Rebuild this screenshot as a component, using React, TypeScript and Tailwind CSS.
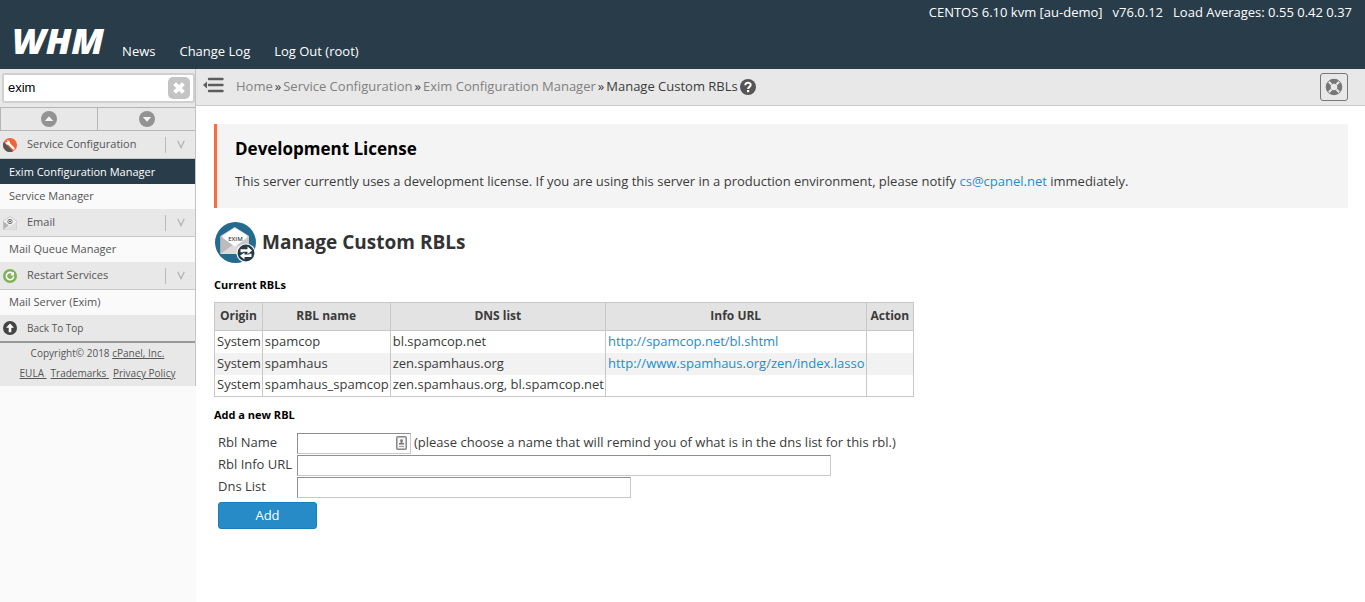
import React, { useState } from "react";

const NAV_LINKS = ["News", "Change Log", "Log Out (root)"];

const MENU = [
  {
    title: "Service Configuration",
    icon: <WrenchIcon />,
    items: ["Exim Configuration Manager", "Service Manager"],
  },
  { title: "Email", icon: <MailIcon />, items: ["Mail Queue Manager"] },
  {
    title: "Restart Services",
    icon: <RestartIcon />,
    items: ["Mail Server (Exim)"],
  },
];

const CRUMBS = ["Home", "Service Configuration", "Exim Configuration Manager"];

const RBLS = [
  {
    name: "spamcop",
    dns: "bl.spamcop.net",
    url: "http://spamcop.net/bl.shtml",
  },
  {
    name: "spamhaus",
    dns: "zen.spamhaus.org",
    url: "http://www.spamhaus.org/zen/index.lasso",
  },
  { name: "spamhaus_spamcop", dns: "zen.spamhaus.org, bl.spamcop.net", url: "" },
];

function WrenchIcon() {
  return (
    <svg width="14" height="14" viewBox="0 0 14 14">
      <circle cx="7" cy="7" r="7" fill="#f0623a" />
      <path d="M0.7 4 A7 7 0 0 0 10 13.3 Z" fill="#555" />
      <path d="M5 4.8 L10.6 10.6" stroke="#fff" strokeWidth="2.2" strokeLinecap="round" />
      <path
        d="M2.6 3.6 L4.4 5.2 L5.3 4.3 L3.6 2.5 C5.4 1.9 7.2 3.2 6.9 5.2 L5.4 6.8 C3.5 7.1 2.1 5.4 2.6 3.6 Z"
        fill="#fff"
      />
    </svg>
  );
}

function MailIcon() {
  return (
    <svg width="14" height="14" viewBox="0 0 14 14">
      <path d="M0.5 5 L7 0.5 L13.5 5 V13.5 H0.5 Z" fill="#f4f4f4" stroke="#c9c9c9" />
      <path d="M0.5 5.5 L6 9.5 L0.5 13.5 Z" fill="#b5b5b5" />
      <path d="M13.5 5.5 L8 9.5 L1 13.8 H13.5 Z" fill="#dedede" />
      <circle cx="7" cy="5.5" r="2.2" fill="none" stroke="#777" strokeWidth="1" />
      <circle cx="7" cy="5.5" r="1" fill="#666" />
    </svg>
  );
}

function RestartIcon() {
  return (
    <svg width="14" height="14" viewBox="0 0 14 14">
      <circle cx="7" cy="7" r="7" fill="#7fb257" />
      <path d="M9.6 4.4 A3.7 3.7 0 1 0 10.7 7.4" fill="none" stroke="#fff" strokeWidth="1.6" />
      <path d="M11 2.8 V6.6 H7.2 Z" fill="#fff" />
    </svg>
  );
}

function TopIcon() {
  return (
    <svg width="14" height="14" viewBox="0 0 14 14">
      <circle cx="7" cy="7" r="7" fill="#444" />
      <path d="M7 2.4 L11 6.8 H8.3 V11.2 H5.7 V6.8 H3 Z" fill="#fff" />
    </svg>
  );
}

function ArrowDisc({ down = false }: { down?: boolean }) {
  return (
    <svg width="16" height="16" viewBox="0 0 16 16">
      <circle cx="8" cy="8" r="8" fill="#939393" />
      <path d={down ? "M3.8 6 H12.2 L8 10.8 Z" : "M3.8 10 H12.2 L8 5.2 Z"} fill="#f4f4f4" />
    </svg>
  );
}

function EximIcon() {
  return (
    <svg width="42" height="42" viewBox="0 0 42 42" className="shrink-0">
      <circle cx="21.5" cy="21.5" r="20.5" fill="#256b90" />
      <path d="M6.5 15 L20.8 6 L35 15 V33 H6.5 Z" fill="#d8d8d8" />
      <path d="M6.5 15 L20.8 25 L6.5 33 Z" fill="#bcbcbc" />
      <path d="M35 15 L20.8 25 L35 33 Z" fill="#c8c8c8" />
      <path d="M6.5 33 L20.8 22.5 L35 33 Z" fill="#dcdcdc" />
      <path d="M9 14.5 L20.8 7 L33 14.5 V17 L20.8 25.5 L9 17 Z" fill="#fff" />
      <text
        x="21.5"
        y="19.5"
        textAnchor="middle"
        fontSize="6"
        fontFamily="Open Sans, sans-serif"
        fontWeight="600"
        fill="#444"
      >
        EXIM
      </text>
      <circle cx="32" cy="32" r="9.6" fill="#fff" />
      <circle cx="32" cy="32" r="8.4" fill="#263a47" />
      <path d="M26.5 31.2 V28.2 H33.5 V25.6 L38.1 29.6 L33.5 33.2 V30.8 H28.9 V31.2 Z" fill="#fff" />
      <path d="M37.5 32.8 V36 H30.5 V38.4 L25.9 34.7 L30.5 31.4 V33.6 H35.3 V32.8 Z" fill="#fff" />
    </svg>
  );
}

function Header() {
  return (
    <header className="flex h-[69px] justify-between bg-[#293c4a] text-white">
      <div className="flex items-end pb-[9px]">
        <a href="#" className="ml-3 text-[36px] leading-[38px] font-extrabold italic">
          WHM
        </a>
        <nav className="ml-[18px] flex gap-6 leading-[18px]">
          {NAV_LINKS.map((link) => (
            <a key={link} href="#">
              {link}
            </a>
          ))}
        </nav>
      </div>
      <div className="flex gap-[10px] pt-[3px] pr-[13px] leading-[18px]">
        <span>CENTOS 6.10 kvm [au-demo]</span>
        <span>v76.0.12</span>
        <span>Load Averages: 0.55 0.42 0.37</span>
      </div>
    </header>
  );
}

function Sidebar() {
  const [query, setQuery] = useState("exim");

  return (
    <aside className="w-[196px] shrink-0 bg-[#fafafa] text-[11px] text-[#555]">
      <div className="border-r border-[#c4c4c4] bg-[#e8e8e8]">
        <div className="py-1 pl-[2px]">
          <div className="flex h-[30px] items-center rounded-[3px] border-2 border-[#d0d0d0] bg-white pr-[3px] pl-1">
            <input
              aria-label="Search"
              value={query}
              onChange={(e) => setQuery(e.target.value)}
              className="w-full min-w-0 font-['Liberation_Sans',sans-serif] text-[13px] text-black outline-none"
            />
            <button
              aria-label="Clear search"
              onClick={() => setQuery("")}
              className="flex size-[22px] shrink-0 items-center justify-center rounded-[5px] bg-[#c4c4c4]"
            >
              <svg width="14" height="14" viewBox="0 0 14 14">
                <path d="M2.6 2.6 L11.4 11.4 M11.4 2.6 L2.6 11.4" stroke="#fff" strokeWidth="4" />
              </svg>
            </button>
          </div>
        </div>
        <div className="grid h-6 grid-cols-2 border-y border-l border-[#b5b5b5]">
          <button aria-label="Previous" className="flex items-center justify-center border-r border-[#b5b5b5]">
            <ArrowDisc />
          </button>
          <button aria-label="Next" className="flex items-center justify-center">
            <ArrowDisc down />
          </button>
        </div>
        {MENU.map((group) => (
          <div key={group.title}>
            <div className="flex h-7 items-center border-b border-[#c8c8c8] pl-[3px]">
              {group.icon}
              <span className="ml-[10px] flex-1">{group.title}</span>
              <button
                aria-label={`Collapse ${group.title}`}
                className="flex h-4 w-[30px] items-center justify-center border-l border-[#bbb]"
              >
                <svg width="8" height="9" viewBox="0 0 8 9">
                  <path d="M0.7 0.8 L4 7.6 L7.3 0.8" fill="none" stroke="#b4b4b4" strokeWidth="1.3" />
                </svg>
              </button>
            </div>
            {group.items.map((item) => (
              <a
                key={item}
                href="#"
                className={
                  item === "Exim Configuration Manager"
                    ? "block h-[25px] bg-[#293c4a] pl-[9px] leading-[25px] text-white"
                    : "block h-[25px] bg-[#fafafa] pl-[9px] leading-6"
                }
              >
                {item}
              </a>
            ))}
          </div>
        ))}
        <a href="#" className="flex h-7 items-center border-b-2 border-[#999] pl-[3px]">
          <TopIcon />
          <span className="ml-[10px] text-[10px]">Back To Top</span>
        </a>
        <footer className="h-[43px] text-center text-[10px] leading-5">
          <p>
            Copyright© 2018{" "}
            <a href="#" className="underline">
              cPanel, Inc.
            </a>
          </p>
          <p className="flex justify-center gap-1 whitespace-pre">
            <a href="#" className="underline">{"EULA "}</a>
            <a href="#" className="underline">{"Trademarks "}</a>
            <a href="#" className="underline">Privacy Policy</a>
          </p>
        </footer>
      </div>
    </aside>
  );
}

function Breadcrumbs() {
  return (
    <div className="flex h-[37px] items-center border-b border-[#ccc] bg-[#e8e8e8] pr-[17px] pl-[7px]">
      <button aria-label="Toggle menu" className="mb-1">
        <svg width="21" height="16" viewBox="0 0 21 16">
          <path d="M6 2 H19.5 M6 8 H19.5 M6 14 H19.5" stroke="#5c5c5c" strokeWidth="2.4" strokeLinecap="round" />
          <path d="M0 8 L4 4.6 V11.4 Z" fill="#5c5c5c" />
        </svg>
      </button>
      <nav className="ml-3 flex flex-1 items-center gap-[2px]">
        {CRUMBS.map((crumb) => (
          <React.Fragment key={crumb}>
            <a href="#" className="text-[#808080]">
              {crumb}
            </a>
            <span>»</span>
          </React.Fragment>
        ))}
        <span>Manage Custom RBLs</span>
        <button aria-label="Help">
          <svg width="16" height="16" viewBox="0 0 16 16">
            <circle cx="8" cy="8" r="8" fill="#555" />
            <path
              d="M5.3 6.2 C5.3 2.9 10.7 3 10.7 6 C10.7 7.8 8.1 7.9 8.1 9.9"
              fill="none"
              stroke="#fff"
              strokeWidth="2"
            />
            <rect x="7" y="11" width="2.2" height="2.2" fill="#fff" />
          </svg>
        </button>
      </nav>
      <button
        aria-label="Support"
        className="flex size-7 items-center justify-center rounded-[3px] border border-[#777]"
      >
        <svg width="18" height="18" viewBox="0 0 18 18">
          <circle cx="9" cy="9" r="5.8" fill="none" stroke="#777" strokeWidth="5" />
          <path
            d="M3.8 3.8 L6.5 6.5 M14.2 3.8 L11.5 6.5 M3.8 14.2 L6.5 11.5 M14.2 14.2 L11.5 11.5"
            stroke="#e8e8e8"
            strokeWidth="2"
          />
        </svg>
      </button>
    </div>
  );
}

const cellStyle = "border-x border-[#c8c8c8] pr-px pb-[2px] pl-[2px]";

function RblTable() {
  return (
    <table className="border-collapse border border-[#c8c8c8] leading-[18px]">
      <thead>
        <tr className="h-7 bg-[#e3e3e3] text-[12px]">
          {["Origin", "RBL name", "DNS list", "Info URL", "Action"].map((head) => (
            <th key={head} className="border border-[#c8c8c8] px-1 pb-[2px]">
              {head}
            </th>
          ))}
        </tr>
      </thead>
      <tbody>
        {RBLS.map((rbl) => (
          <tr key={rbl.name} className="h-[22px] even:bg-[#f2f2f2]">
            <td className={cellStyle}>System</td>
            <td className={cellStyle}>{rbl.name}</td>
            <td className={cellStyle}>{rbl.dns}</td>
            <td className={cellStyle}>
              {rbl.url && (
                <a href={rbl.url} className="text-[#1b8fcb]">
                  {rbl.url}
                </a>
              )}
            </td>
            <td className={cellStyle} />
          </tr>
        ))}
      </tbody>
    </table>
  );
}

const inputStyle =
  "h-[21px] border border-t-[#8f8f8f] border-r-[#c8c8c8] border-b-[#c8c8c8] border-l-[#8f8f8f] bg-white px-1 outline-none";

function AddForm() {
  return (
    <form className="ml-1" onSubmit={(e) => e.preventDefault()}>
      <div className="grid grid-cols-[79px_1fr] gap-y-px leading-[18px]">
        <label htmlFor="rblname">Rbl Name</label>
        <div className="flex items-start gap-[3px]">
          <div className="relative flex">
            <input id="rblname" className={`${inputStyle} w-[114px] pr-5`} />
            <svg width="11" height="14" viewBox="0 0 11 14" className="absolute top-[3px] right-1">
              <rect x="0.75" y="0.75" width="9.5" height="12.5" rx="1" fill="#f4f4f4" stroke="#888" strokeWidth="1.5" />
              <circle cx="5.5" cy="4.6" r="1.3" fill="#777" />
              <path d="M4.6 5 H6.4 V7 H8 V8.6 H3 V7 H4.6 Z" fill="#777" />
              <path d="M3 10.4 H8" stroke="#999" />
            </svg>
          </div>
          <span>(please choose a name that will remind you of what is in the dns list for this rbl.)</span>
        </div>
        <label htmlFor="rblurl">Rbl Info URL</label>
        <input id="rblurl" className={`${inputStyle} w-[534px]`} />
        <label htmlFor="dnslist">Dns List</label>
        <input id="dnslist" className={`${inputStyle} w-[334px]`} />
      </div>
      <button
        type="submit"
        className="mt-1 h-[27px] w-[99px] rounded-[3px] border border-[#1a7fb8] bg-[#268bc6] text-white"
      >
        Add
      </button>
    </form>
  );
}

function App() {
  return (
    <div className="flex min-h-screen flex-col bg-white font-['Open_Sans',sans-serif] text-[13px] text-[#3b3b3b]">
      <Header />
      <div className="flex flex-1">
        <Sidebar />
        <main className="min-w-0 flex-1">
          <Breadcrumbs />
          <div className="pt-[18px] pr-[17px] pl-[18px]">
            <section className="h-[84px] border-l-[3px] border-[#ff6c3b] bg-[#f4f4f4] px-[18px] pt-[13px]">
              <h2 className="text-[17px] leading-6 font-bold text-black">Development License</h2>
              <p className="mt-[11px] leading-[18px]">
                This server currently uses a development license. If you are using this server in a production
                environment, please notify{" "}
                <a href="mailto:cs@cpanel.net" className="text-[#1b8fcb]">
                  cs@cpanel.net
                </a>{" "}
                immediately.
              </p>
            </section>
            <h1 className="mt-[13px] flex items-center gap-[6px] text-[19px] leading-10 font-bold text-[#333]">
              <EximIcon />
              Manage Custom RBLs
            </h1>
            <h3 className="mt-[13px] mb-2 text-[11px] leading-[18px] font-bold text-black">Current RBLs</h3>
            <RblTable />
            <h3 className="mt-[9px] mb-[9px] text-[11px] leading-[18px] font-bold text-black">Add a new RBL</h3>
            <AddForm />
          </div>
        </main>
      </div>
    </div>
  );
}

export default App;
